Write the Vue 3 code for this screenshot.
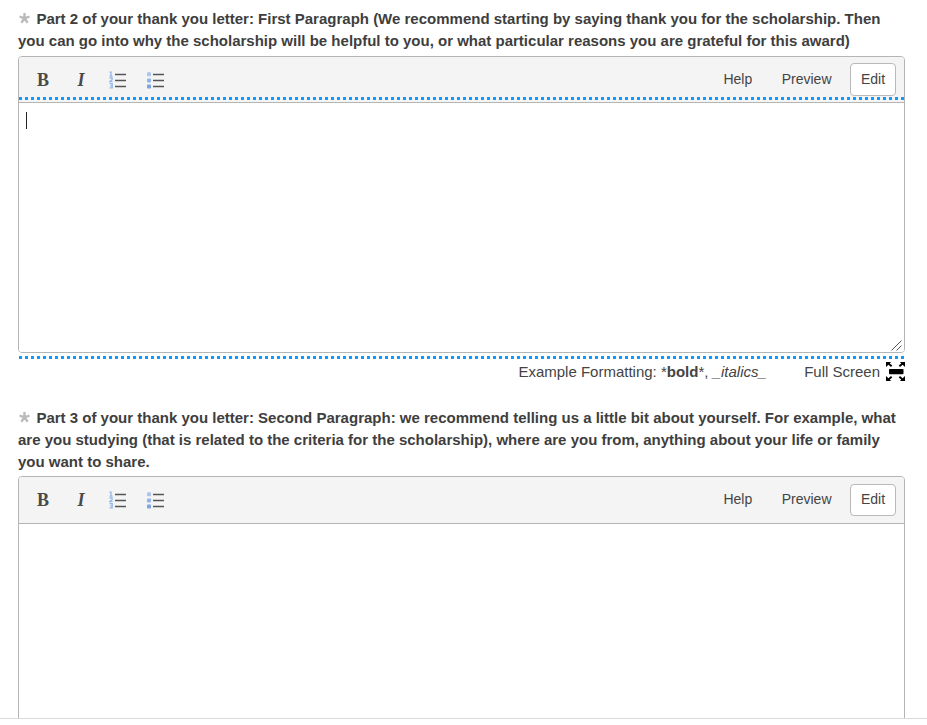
<template>
  <div class="page">
    <section v-for="q in questions" :key="q.id" class="field" :class="{ focused: q.focused }">
      <label class="question">
        <svg class="required" width="11" height="11" viewBox="0 0 11 11">
          <path d="M5.5 0V5.4M0.5 3.5L5.5 5.4L10.5 3.5M2.3 9.8L5.5 5.4L8.7 9.8" />
        </svg>
        <span v-for="(line, i) in q.lines" :key="i" class="line" :class="{ first: i === 0 }">{{ line }}</span>
      </label>

      <div class="editor">
        <div class="toolbar">
          <button class="tool bold">B</button>
          <button class="tool italic">I</button>
          <button class="tool list">
            <svg width="18" height="18" viewBox="0 0 18 18">
              <path class="rules" d="M6 3.4h11M6 9.5h11M6 15.6h11" />
              <path class="digits" d="M0.5 1.2h1.5v4M0.5 5.2h3M0.5 7h2.6v1.7L0.5 10.7h3M0.5 12.7h2.7v4.2H0.5M1.2 14.8h2" />
            </svg>
          </button>
          <button class="tool list">
            <svg width="18" height="18" viewBox="0 0 18 18">
              <path class="rules" d="M6 3.4h11M6 9.5h11M6 15.6h11" />
              <rect x="0" y="1.2" width="4" height="4" rx="0.8" fill="#a9c6f0" />
              <rect x="0" y="7.4" width="4" height="4" rx="0.8" fill="#8fb4ea" />
              <rect x="0" y="13.6" width="4" height="4" rx="0.8" fill="#7ba4e2" />
            </svg>
          </button>
          <div class="spacer"></div>
          <a class="link help">Help</a>
          <a class="link preview">Preview</a>
          <a class="link edit">Edit</a>
        </div>
        <div class="dots top"></div>
        <div class="body">
          <i v-if="q.focused" class="caret"></i>
          <svg v-if="q.focused" class="grip" width="11" height="11" viewBox="0 0 11 11">
            <path d="M0.5 10.5L10.5 0.5M5.5 10.5L10.5 5.5" />
          </svg>
        </div>
      </div>
      <div class="dots bottom"></div>

      <div v-if="q.focused" class="hints">
        <span class="example">Example Formatting: *<b>bold</b>*, <em>_italics_</em></span>
        <span class="full">Full Screen</span>
        <svg class="expand" width="19" height="19" viewBox="0 0 19 19">
          <rect x="3" y="7" width="14.5" height="5.2" rx="0.8" />
          <path d="M0 0h5L3.8 1.4L6.3 3.6L5 5L2.4 2.8L0 5zM19 0h-5l1.2 1.4L12.7 3.6L14 5l2.6-2.2L19 5zM0 19h5l-1.2-1.4L6.3 15.4L5 14L2.4 16.2L0 14zM19 19h-5l1.2-1.4L12.7 15.4L14 14l2.6 2.2L19 14z" />
        </svg>
      </div>
    </section>
    <div class="footer"></div>
  </div>
</template>

<script setup>
const questions = [
  {
    id: 2,
    focused: true,
    lines: [
      'Part 2 of your thank you letter: First Paragraph (We recommend starting by saying thank you for the scholarship. Then',
      'you can go into why the scholarship will be helpful to you, or what particular reasons you are grateful for this award)'
    ]
  },
  {
    id: 3,
    focused: false,
    lines: [
      'Part 3 of your thank you letter: Second Paragraph: we recommend telling us a little bit about yourself. For example, what',
      'are you studying (that is related to the criteria for the scholarship), where are you from, anything about your life or family',
      'you want to share.'
    ]
  }
]
</script>

<style>
body { margin: 0; overflow: hidden; background: #fff; }
</style>

<style scoped>
.page {
  position: relative;
  box-sizing: border-box;
  height: 725px;
  padding: 8px 22px 0 18px;
  overflow: hidden;
  color: #444;
  font: 14px/22px "Liberation Sans", Arial, sans-serif;
}
.field { height: 399px; }

.question { position: relative; display: block; font-weight: bold; font-size: 15px; color: #3e3e3e; }
.required { position: absolute; left: 1px; top: 5px; fill: none; stroke: #bbb; stroke-width: 2.4; }
.line { display: block; white-space: nowrap; }
.line.first { padding-left: 18.4px; }

.editor {
  position: relative;
  box-sizing: border-box;
  width: 887px;
  height: 297px;
  margin-top: 4px;
  border: 1px solid #b5b5b5;
  border-radius: 4px;
  overflow: hidden;
}
.field:not(.focused) .editor { margin-top: 3px; }
.toolbar {
  display: flex;
  align-items: flex-start;
  box-sizing: border-box;
  height: 46px;
  padding: 6px 8px 0 5px;
  background: #f4f4f4;
  border-bottom: 1px solid #b5b5b5;
}
.field:not(.focused) .toolbar { height: 47px; }
.tool {
  display: flex;
  align-items: center;
  justify-content: center;
  box-sizing: border-box;
  width: 38px;
  height: 34px;
  padding: 0;
  border: 0;
  background: none;
  color: #4a4a4a;
  font: bold 18px "Liberation Serif", "Times New Roman", serif;
}
.tool.italic { font-style: italic; }
.tool.list { padding-right: 2px; }
.rules { fill: none; stroke: #555; stroke-width: 1.5; }
.digits { fill: none; stroke: #94b8ec; stroke-width: 1.3; }
.spacer { flex: 1; }
.link { box-sizing: border-box; height: 33px; line-height: 32px; }
.help { margin-right: 29.5px; }
.preview { margin-right: 18.5px; }
.edit {
  width: 46px;
  line-height: 31px;
  text-align: center;
  background: #fff;
  border: 1px solid #b9b9b9;
  border-radius: 4px;
}
.field:not(.focused) .edit { height: 32px; margin-top: 1px; line-height: 29px; }

.dots {
  display: none;
  height: 3px;
  background: repeating-linear-gradient(90deg, #0d99ff 0 3px, transparent 3px 6px);
}
.focused .dots { display: block; }
.dots.top { position: absolute; top: 40px; left: 0; right: 0; }
.dots.bottom { width: 885px; margin: 3px 0 0 1px; }

.body { position: relative; height: 249px; background: #fff; }
.caret { position: absolute; left: 7px; top: 9px; width: 1px; height: 17px; background: #222; }
.grip { position: absolute; right: 2px; bottom: 1px; fill: none; stroke: #555; stroke-width: 1; }

.hints { display: flex; align-items: center; width: 887px; height: 24px; font-size: 15px; }
.example { margin-left: 500.4px; padding-top: 2px; white-space: nowrap; }
.full { margin-left: auto; margin-right: 6px; padding-top: 2px; white-space: nowrap; }
.expand { flex: none; fill: #000; }

.footer {
  position: absolute;
  left: 0;
  right: 0;
  top: 718px;
  height: 7px;
  box-sizing: border-box;
  background: #fff;
  border-top: 1px solid #d9d9d9;
}
</style>
